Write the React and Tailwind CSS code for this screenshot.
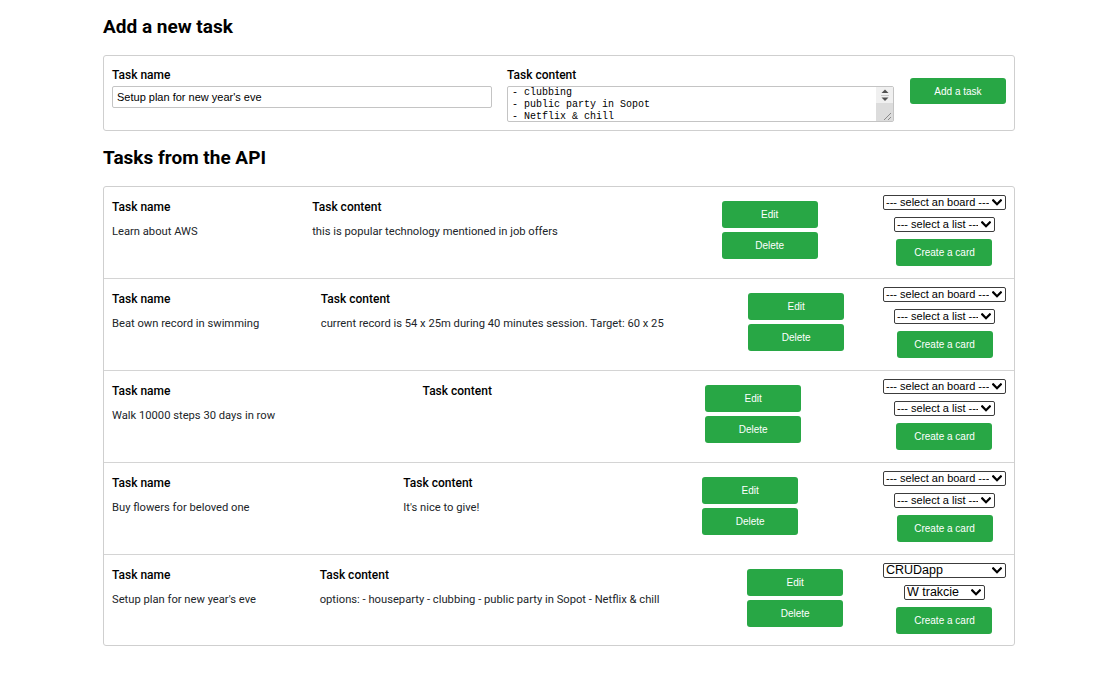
import React, { useEffect, useRef } from "react";

const tasks = [
  { name: "Learn about AWS", content: "this is popular technology mentioned in job offers", board: "--- select an board ---", list: "--- select a list ---", listW: "w-[101px]", small: true },
  { name: "Beat own record in swimming", content: "current record is 54 x 25m during 40 minutes session. Target: 60 x 25", board: "--- select an board ---", list: "--- select a list ---", listW: "w-[101px]", small: true },
  { name: "Walk 10000 steps 30 days in row", content: "", board: "--- select an board ---", list: "--- select a list ---", listW: "w-[101px]", small: true },
  { name: "Buy flowers for beloved one", content: "It's nice to give!", board: "--- select an board ---", list: "--- select a list ---", listW: "w-[101px]", small: true },
  { name: "Setup plan for new year's eve", content: "options: - houseparty - clubbing - public party in Sopot - Netflix & chill", board: "CRUDapp", list: "W trakcie", listW: "w-[81px]", small: false },
];

function Chevron() {
  return (
    <svg width="10" height="7" viewBox="0 0 10 7" className="absolute right-[4px] top-[4px] pointer-events-none">
      <path d="M1.2 1.4 L5 5.2 L8.8 1.4" fill="none" stroke="#000" strokeWidth="2.2" strokeLinecap="square" />
    </svg>
  );
}

function Sel({ label, w, small }) {
  return (
    <div className={`relative ${w} h-[15px]`}>
      <select
        defaultValue={label}
        className={`block appearance-none w-full h-full border border-[#3c3c3c] rounded-[2px] bg-white pl-[2px] pr-[16px] leading-[13px] text-black font-['Liberation_Sans',Arial,sans-serif] outline-none ${small ? "text-[11px]" : "text-[12.5px]"}`}
      >
        <option>{label}</option>
      </select>
      <Chevron />
    </div>
  );
}

function Btn({ children, cls }) {
  return (
    <button className={`block w-[96px] bg-[#28a745] text-white rounded-[3px] text-[10px] font-['Liberation_Sans',Arial,sans-serif] ${cls}`}>
      {children}
    </button>
  );
}

function Row({ t }) {
  return (
    <div className="flex h-[92px] last:h-[90px] px-[8px] border-b border-[#d4d4d4] last:border-b-0">
      <div className="grow flex flex-col pt-[13px]">
        <div className="text-[12px] leading-[14px] font-medium text-black whitespace-nowrap">Task name</div>
        <div className="text-[11.2px] leading-[14px] mt-[11px] text-[#212529] whitespace-nowrap">{t.name}</div>
      </div>
      <div className="grow flex flex-col pt-[13px]">
        <div className="text-[12px] leading-[14px] font-medium text-black whitespace-nowrap">Task content</div>
        <div className="text-[11.2px] leading-[14px] mt-[11px] text-[#212529] whitespace-nowrap">{t.content}</div>
      </div>
      <div className="grow flex flex-col items-center pt-[14px]">
        <div className="-ml-[8px] mr-[8px] flex flex-col gap-[4px]">
          <Btn cls="h-[27px]">Edit</Btn>
          <Btn cls="h-[27px]">Delete</Btn>
        </div>
      </div>
      <div className="w-[123px] flex flex-col items-center pt-[8px]">
        <Sel label={t.board} w="w-[123px]" small={t.small} />
        <div className="mt-[7px]">
          <Sel label={t.list} w={t.listW} small={t.small} />
        </div>
        <Btn cls="h-[27px] mt-[7px]">Create a card</Btn>
      </div>
    </div>
  );
}

function FakeScrollbar() {
  return (
    <div className="absolute right-[1px] top-[1px] bottom-[1px] w-[17px] flex flex-col pointer-events-none">
      <div className="h-[16px] bg-[#f0f0f0] flex items-center justify-center">
        <svg width="10" height="14" viewBox="0 0 10 14">
          <path d="M5 1.5 L8.5 5 L1.5 5 Z" fill="#505050" />
          <path d="M1 7.5 H9" stroke="#c8c8c8" strokeWidth="1" />
          <path d="M1.5 9.5 L8.5 9.5 L5 13 Z" fill="#505050" />
        </svg>
      </div>
      <div className="grow bg-[#dcdcdc] relative">
        <svg width="17" height="18" viewBox="0 0 17 18" className="absolute right-0 bottom-0">
          <path d="M15 10 L8 17 M15 14 L12 17" stroke="#8a8a8a" strokeWidth="1" />
        </svg>
      </div>
    </div>
  );
}

export default function App() {
  const ta = useRef(null);
  useEffect(() => {
    if (ta.current) ta.current.scrollTop = 24;
  }, []);
  return (
    <div className="min-h-[700px] bg-white font-['Roboto','Liberation_Sans',sans-serif] text-[#212529]">
      <div className="ml-[103px] w-[912px] pt-[15px]">
        <h2 className="text-[19px] leading-[24px] font-bold text-black">Add a new task</h2>
        <div className="mt-[16px] border border-[#cfcfcf] rounded-[3px] h-[76px] flex px-[8px] pt-[12px]">
          <div className="w-[380px] flex flex-col">
            <label className="text-[12px] leading-[14px] font-medium text-black">Task name</label>
            <input
              defaultValue="Setup plan for new year's eve"
              className="mt-[4px] h-[22px] border border-[#c4c4c4] rounded-[2px] px-[4px] text-[11px] text-black font-['Liberation_Sans',Arial,sans-serif] outline-none"
            />
          </div>
          <div className="ml-[15px] w-[387px] flex flex-col">
            <label className="text-[12px] leading-[14px] font-medium text-black">Task content</label>
            <div className="relative mt-[4px] h-[36px]">
              <textarea
                ref={ta}
                defaultValue={"options:\n- houseparty\n- clubbing\n- public party in Sopot\n- Netflix & chill"}
                className="block w-full h-full border border-[#c4c4c4] rounded-[2px] pl-[4px] pr-[20px] py-0 text-[10px] leading-[12px] text-black font-['Liberation_Mono','DejaVu_Sans_Mono',monospace] outline-none overflow-hidden resize-none"
              />
              <FakeScrollbar />
            </div>
          </div>
          <div className="ml-[16px] pt-[10px]">
            <Btn cls="h-[26px]">Add a task</Btn>
          </div>
        </div>
        <h2 className="mt-[15px] text-[19px] leading-[24px] font-bold text-black">Tasks from the API</h2>
        <div className="mt-[16px] border border-[#cfcfcf] rounded-[3px]">
          {tasks.map((t, i) => (
            <Row key={i} t={t} />
          ))}
        </div>
      </div>
    </div>
  );
}
